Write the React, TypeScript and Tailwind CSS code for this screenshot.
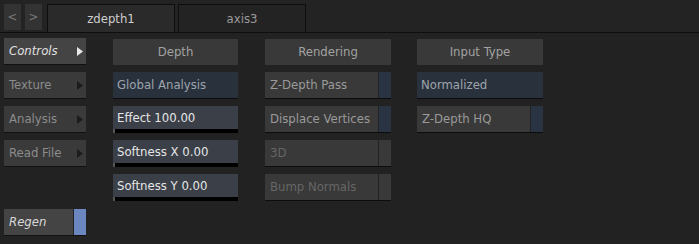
import { ReactNode } from 'react';

const font = { fontFamily: '"DejaVu Sans Condensed", "DejaVu Sans", sans-serif' };

function Triangle({ light }: { light?: boolean }) {
  return (
    <svg width="6" height="9" viewBox="0 0 6 9" className="shrink-0">
      <path d="M0 0 L6 4.5 L0 9 Z" fill={light ? '#e8e8e8' : '#1c1c1c'} />
    </svg>
  );
}

function SideButton({ label, active }: { label: string; active?: boolean }) {
  return (
    <div
      className={`h-[27px] flex items-center justify-between pl-[5px] pr-[3px] border-b border-[#111] ${
        active ? 'bg-[#444] text-[#e0e0e0] italic' : 'bg-[#3a3a3a] text-[#8c8c8c]'
      }`}
    >
      <span>{label}</span>
      <Triangle light={active} />
    </div>
  );
}

function Header({ children }: { children: ReactNode }) {
  return (
    <div className="h-[26px] flex items-center justify-center bg-[#393939] text-[#a2a2a2]">{children}</div>
  );
}

function Toggle({ label, on, dim }: { label: string; on?: boolean; dim?: boolean }) {
  return (
    <div className="h-[27px] flex border-b border-[#0c0c0c]">
      <div className={`flex-1 flex items-center pl-[5px] bg-[#393939] ${dim ? 'text-[#666]' : 'text-[#9a9a9a]'}`}>
        {label}
      </div>
      <div className={`w-[12px] ml-[1px] ${on ? 'bg-[#2a3341]' : 'bg-[#393939]'}`} />
    </div>
  );
}

function Selected({ label }: { label: string }) {
  return (
    <div className="h-[27px] flex items-center pl-[4px] bg-[#29313d] text-[#9ea4ac] border-b border-[#0c0c0c]">
      {label}
    </div>
  );
}

function Slider({ label }: { label: string }) {
  return (
    <div className="h-[27px] flex flex-col">
      <div className="h-[23px] flex items-center pl-[4px] bg-[#3a3f48] text-[#e6e6e6]">{label}</div>
      <div className="h-[4px] bg-black flex">
        <div className="w-[2px] bg-[#555]" />
      </div>
    </div>
  );
}

export default function App() {
  return (
    <div className="w-[699px] h-[244px] bg-[#222] text-[13px] overflow-hidden" style={font}>
      {/* Tab bar */}
      <div className="h-[33px] flex items-end gap-[4px] pl-[4px] border-b border-[#0e0e0e] bg-[#232323]">
        <div className="flex gap-[4px] self-start mt-[4px]">
          <div className="w-[17px] h-[26px] bg-[#333] text-[#777] flex items-center justify-center">&lt;</div>
          <div className="w-[17px] h-[26px] bg-[#333] text-[#777] flex items-center justify-center">&gt;</div>
        </div>
        <div className="flex gap-[3px] ml-[1px]">
          <div className="w-[128px] h-[28px] bg-[#2a2a2a] border border-b-0 border-[#0e0e0e] text-[#cfcfcf] flex items-center justify-center">
            zdepth1
          </div>
          <div className="w-[128px] h-[28px] bg-[#232323] border border-b-0 border-[#0e0e0e] text-[#9a9a9a] flex items-center justify-center">
            axis3
          </div>
        </div>
      </div>

      {/* Panel */}
      <div className="flex pl-[4px] pt-[5px]">
        <div className="w-[82px] flex flex-col gap-[7px]">
          <SideButton label="Controls" active />
          <SideButton label="Texture" />
          <SideButton label="Analysis" />
          <SideButton label="Read File" />
          <div className="h-[28px]" />
          <div className="h-[27px] flex border-b border-[#111]">
            <div className="flex-1 bg-[#444] text-[#d8d8d8] italic flex items-center pl-[5px]">Regen</div>
            <div className="w-[12px] ml-[1px] bg-[#6c86bf]" />
          </div>
        </div>

        <div className="w-[125px] ml-[27px] mt-[1px] flex flex-col gap-[7px]">
          <Header>Depth</Header>
          <Selected label="Global Analysis" />
          <Slider label="Effect 100.00" />
          <Slider label="Softness X 0.00" />
          <Slider label="Softness Y 0.00" />
        </div>

        <div className="w-[126px] ml-[27px] mt-[1px] flex flex-col gap-[7px]">
          <Header>Rendering</Header>
          <Toggle label="Z-Depth Pass" on />
          <Toggle label="Displace Vertices" on />
          <Toggle label="3D" dim />
          <Toggle label="Bump Normals" dim />
        </div>

        <div className="w-[126px] ml-[26px] mt-[1px] flex flex-col gap-[7px]">
          <Header>Input Type</Header>
          <Selected label="Normalized" />
          <Toggle label="Z-Depth HQ" on />
        </div>
      </div>
    </div>
  );
}
